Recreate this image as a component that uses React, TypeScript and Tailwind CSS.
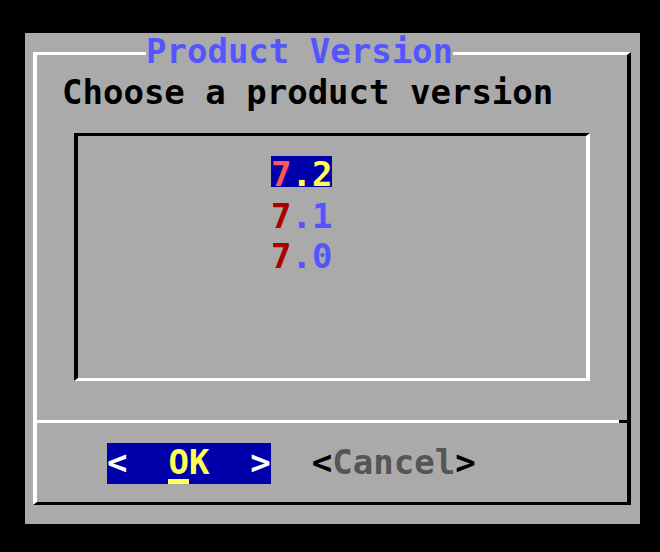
import React from 'react';

const versions = [
  { major: '7', minor: '.2', selected: true },
  { major: '7', minor: '.1', selected: false },
  { major: '7', minor: '.0', selected: false },
];

export default function App() {
  return (
    <div className="w-[660px] h-[552px] bg-black overflow-hidden pt-[33px] pl-[25px] font-['DejaVu_Sans_Mono',monospace] font-bold text-[34px]">
      {/* dialog panel */}
      <div className="w-[615px] h-[491px] bg-[#aaaaaa] pt-[19px] pl-[8px]">
        <div className="relative w-[598px] h-[453px] border-l-4 border-t-[3px] border-r-4 border-b-[3px] border-l-white border-t-white border-r-black border-b-black">
          {/* title sits over the top edge */}
          <span className="absolute top-[-18px] left-[109px] bg-[#aaaaaa] leading-[28px] text-[#5555ff] whitespace-pre">
            Product Version
          </span>

          <div className="mt-[17px] pl-[25px] leading-[40px] text-black whitespace-pre">Choose a product version</div>

          {/* menu list */}
          <div className="mt-[21px] ml-[37px] w-[516px] h-[248px] border-t-[3px] border-l-4 border-b-[3px] border-r-4 border-t-black border-l-black border-b-white border-r-white pl-[193px] pt-[20px] flex flex-col items-start">
            {versions.map((v, i) =>
              v.selected ? (
                <div key={v.minor} className="h-[31px] leading-[37px] bg-[#0000aa] whitespace-pre">
                  <span className="text-[#ff5555]">{v.major}</span>
                  <span className="text-[#ffff55]">{v.minor}</span>
                </div>
              ) : (
                <div key={v.minor} className={i === 1 ? 'mt-[9px] leading-[40px] whitespace-pre' : 'leading-[40px] whitespace-pre'}>
                  <span className="text-[#aa0000]">{v.major}</span>
                  <span className="text-[#5555ff]">{v.minor}</span>
                </div>
              )
            )}
          </div>

          {/* separator */}
          <div className="mt-[39px] flex h-[3px]">
            <div className="flex-1 bg-white" />
            <div className="w-[8px] bg-black" />
          </div>

          {/* buttons */}
          <div className="mt-[20px] pl-[70px] flex gap-[41px]">
            <div className="h-[41px] leading-[38px] bg-[#0000aa] whitespace-pre">
              <span className="text-white">{'<  '}</span>
              <span className="relative inline-block text-[#ffff55]">
                O
                <span className="absolute left-0 top-[36px] w-[21px] h-[5px] bg-[#ffff55]" />
              </span>
              <span className="text-[#ffff55]">K</span>
              <span className="text-white">{'  >'}</span>
            </div>
            <div className="h-[41px] leading-[38px] whitespace-pre">
              <span className="text-black">{'<'}</span>
              <span className="text-[#555555]">Cancel</span>
              <span className="text-black">{'>'}</span>
            </div>
          </div>
        </div>
      </div>
    </div>
  );
}
